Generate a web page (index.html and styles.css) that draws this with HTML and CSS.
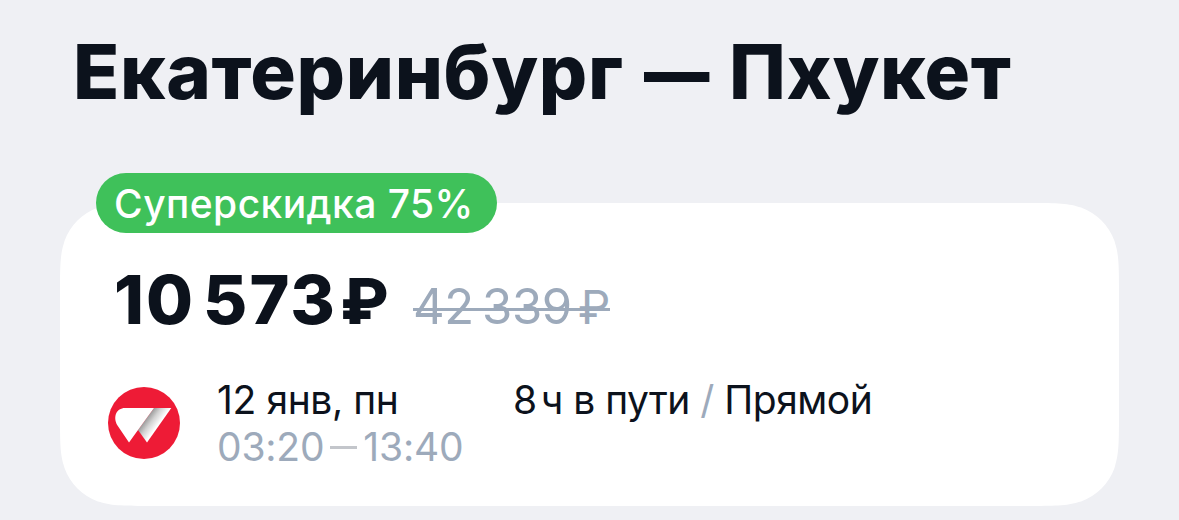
FILE: index.html
```html
<!DOCTYPE html>
<html lang="ru">
<head>
    <meta charset="UTF-8">
    <meta name="viewport" content="width=device-width, initial-scale=1.0">
    <title>Екатеринбург — Пхукет</title>
    <link rel="stylesheet" href="styles.css">
</head>
<body>
    <h1>Екатеринбург <span class="long-dash">—</span> Пхукет</h1>

    <!-- Ticket card -->
    <section class="ticket">
        <span class="badge">Суперскидка 75%</span>

        <div class="prices">
            <span class="price">10<i></i>573<i></i><span class="rub">₽</span></span>
            <span class="old-price">42<i></i>339<i></i><span class="rub">₽</span></span>
        </div>

        <div class="flight">
            <svg class="logo" viewBox="0 0 72 72">
                <defs>
                    <linearGradient id="shade" gradientUnits="userSpaceOnUse" x1="37" y1="33" x2="48" y2="41">
                        <stop offset="0" stop-color="#999"/>
                        <stop offset="0.45" stop-color="#d2d2d2"/>
                        <stop offset="1" stop-color="#fff"/>
                    </linearGradient>
                </defs>
                <circle cx="36" cy="36" r="36" fill="#ee1b36"/>
                <path d="M46 21H63.3L39 55.5L30 43Z" fill="url(#shade)"/>
                <path d="M17 21H46L30 43L21 55.500L9.500 38.500C4.500 30 8.500 21 17 21Z" fill="#fff"/>
            </svg>
            <div class="when">
                <p class="date">12 янв, пн</p>
                <p class="time">03:20<b class="dash"></b>13:40</p>
            </div>
            <p class="route">8<i></i>ч в пути <span class="slash">/</span> Прямой</p>
        </div>
    </section>
</body>
</html>
```
FILE: styles.css
```css
body {
    margin: 0;
    height: 520px;
    overflow: hidden;
    background-color: #eff0f4;
    color: #0c121c;
    font-family: Inter, sans-serif;
}

h1 {
    margin: 0;
    padding: 25px 0 0 73px;
    font-size: 76px;
    line-height: 92px;
    font-weight: 800;
    letter-spacing: 0.65px;
    white-space: nowrap;
}

.long-dash {
    display: inline-block;
    width: 67px;
    margin: 0 1px 0 3px;
    transform: scaleX(0.86);
    transform-origin: left;
}

.ticket {
    position: relative;
    box-sizing: border-box;
    width: 1059px;
    height: 303px;
    margin: 86px 0 0 60px;
    padding: 56px 48px 0;
}

/* card background with smooth corners */
.ticket::before {
    content: "";
    position: absolute;
    z-index: -1;
    inset: 0;
    background-color: #fff;
    clip-path: path("M91.7 0H967.3C993.7 0 1006.900 0 1018.800 3.900L1021.100 4.500C1036.600 10.100 1048.900 22.400 1054.500 37.900L1055.100 40.200C1059 52.100 1059 65.300 1059 91.700V211.300C1059 237.700 1059 250.900 1055.100 262.800L1054.500 265.100C1048.900 280.600 1036.600 292.900 1021.100 298.500L1018.800 299.100C1006.900 303 993.700 303 967.300 303H91.700C65.300 303 52.100 303 40.200 299.100L37.900 298.500C22.400 292.900 10.100 280.600 4.500 265.100L3.900 262.800C0 250.900 0 237.700 0 211.300V91.700C0 65.300 0 52.100 3.900 40.200L4.500 37.900C10.100 22.400 22.400 10.100 37.900 4.500L40.200 3.900C52.100 0 65.300 0 91.700 0Z");
}

/* sits over the top edge of the card */
.badge {
    position: absolute;
    top: -30px;
    left: 36px;
    box-sizing: border-box;
    width: 401px;
    height: 60px;
    padding-left: 18px;
    border-radius: 30px;
    background-color: #3fc15a;
    color: #fff;
    font-size: 39px;
    line-height: 61px;
    font-weight: 500;
    letter-spacing: 0.45px;
    white-space: nowrap;
}

.prices {
    display: flex;
    align-items: baseline;
    gap: 26px;
    height: 80px;
    padding-left: 6px;
    line-height: 80px;
    white-space: nowrap;
}

.price {
    width: 273px;
    font-size: 68px;
    font-weight: 800;
    letter-spacing: 2px;
}

.old-price {
    position: relative;
    color: #9daabb;
    font-size: 49px;
    letter-spacing: -0.3px;
}

.old-price::after {
    content: "";
    position: absolute;
    left: 0;
    top: 41px;
    width: 197px;
    height: 3px;
    background-color: #9daabb;
}

i {
    display: inline-block;
    width: 8px;
}

.rub {
    margin-left: -2px;
    font-size: 0.94em;
}

.price .rub {
    margin-left: -5px;
}

.flight {
    display: flex;
    margin-top: 37px;
    font-size: 39px;
    line-height: 47px;
    letter-spacing: -0.4px;
    white-space: nowrap;
}

.flight p {
    margin: 0;
}

.route {
    letter-spacing: -0.5px;
}

.route i {
    width: 4px;
}

.logo {
    width: 72px;
    height: 72px;
    margin: 11px 37px 0 0;
}

.when {
    width: 296px;
}

.time,
.slash {
    color: #9daabb;
}

.time {
    letter-spacing: -0.2px;
}

.dash {
    display: inline-block;
    width: 27px;
    height: 3px;
    margin: 0 6px 12px;
    background-color: #c3c6cb;
}
```
